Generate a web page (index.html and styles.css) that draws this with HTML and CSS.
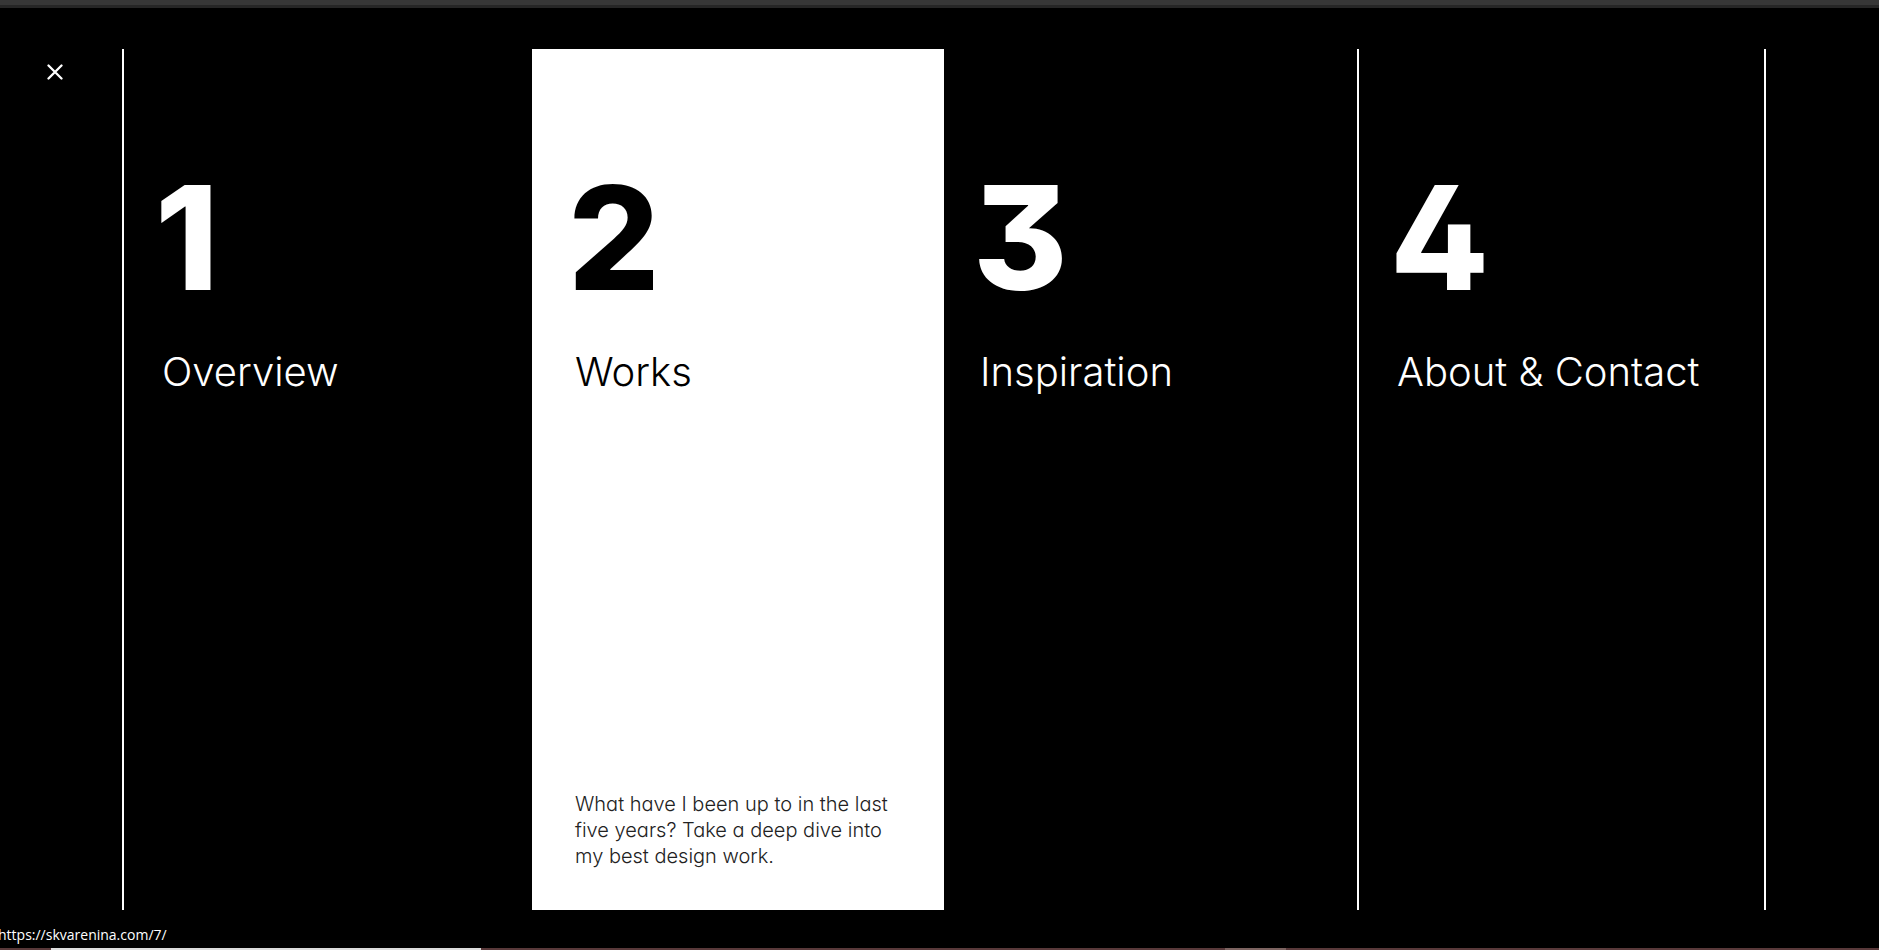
FILE: index.html
```html
<!DOCTYPE html>
<html lang="en">
<head>
<meta charset="utf-8">
<title>Menu</title>
<link rel="stylesheet" href="styles.css">
</head>
<body>
<div class="page">
  <div class="topbar"></div>
  <nav class="menu" aria-label="Main">
    <div class="rail">
      <button class="close" type="button" aria-label="Close menu">
        <svg width="16" height="16" viewBox="0 0 16 16" aria-hidden="true"><path d="M1.5 1.5l13 13M14.5 1.5l-13 13" stroke="currentColor" stroke-width="2.3" fill="none" stroke-linecap="round"/></svg>
      </button>
    </div>
    <a class="panel panel-line" href="#overview"><span class="number">1</span><span class="title">Overview</span></a>
    <a class="panel panel-active" href="#works"><span class="number">2</span><span class="title">Works</span><span class="note">What have I been up to in the last five years? Take a deep dive into my best design work.</span></a>
    <a class="panel" href="#inspiration"><span class="number">3</span><span class="title">Inspiration</span></a>
    <a class="panel panel-line panel-end" href="#about"><span class="number">4</span><span class="title">About &amp; Contact</span></a>
  </nav>
  <footer class="status"><span class="url">https://skvarenina.com/7/</span></footer>
  <div class="strip"><span class="strip-tab"></span><span class="strip-tab strip-dim"></span></div>
</div>
</body>
</html>
```
FILE: styles.css
```css
* { box-sizing: border-box; }
body { margin: 0; background: #000; color: #fff; font-family: Inter, "Liberation Sans", sans-serif; }
.page { display: flex; flex-direction: column; min-height: 100vh; overflow: hidden; }
.topbar { height: 8px; background: #373737; border-bottom: 3px solid #262626; }
.menu {
  flex: 1;
  display: grid;
  grid-template-columns: 122px 410fr 412fr 413fr 409fr;
  padding: 41px 113px 0 0;
}
.rail { padding: 7px 0 0 39px; }
.close { display: flex; width: 32px; height: 32px; padding: 8px; border: 0; background: none; color: #fff; }
.panel { display: flex; flex-direction: column; padding: 105px 36px 41px; color: #fff; text-decoration: none; }
.panel-line { border-left: 2px solid #fff; padding-left: 38px; }
.panel-end { border-right: 2px solid #fff; }
.panel-active { background: #fff; color: #000; padding-left: 43px; padding-right: 48px; }
.number { margin-left: -7px; font-size: 144px; line-height: 168px; font-weight: 800; font-feature-settings: "cv02", "cv09"; }
.title { margin-top: 26px; font-size: 40px; line-height: 48px; font-weight: 300; white-space: nowrap; }
.note { margin-top: auto; font-size: 20px; line-height: 26px; font-weight: 300; color: #222; font-feature-settings: "cv11"; }
.status { height: 38px; padding-top: 15px; font: 14px/20px "Open Sans", sans-serif; }
.url { display: block; margin-left: -2px; }
.strip { display: flex; justify-content: space-between; height: 2px; padding: 0 593px 0 51px; background: #59393a; }
.strip-tab { width: 430px; background: #ddd; }
.strip-dim { width: 61px; background: #7d6461; }
```
